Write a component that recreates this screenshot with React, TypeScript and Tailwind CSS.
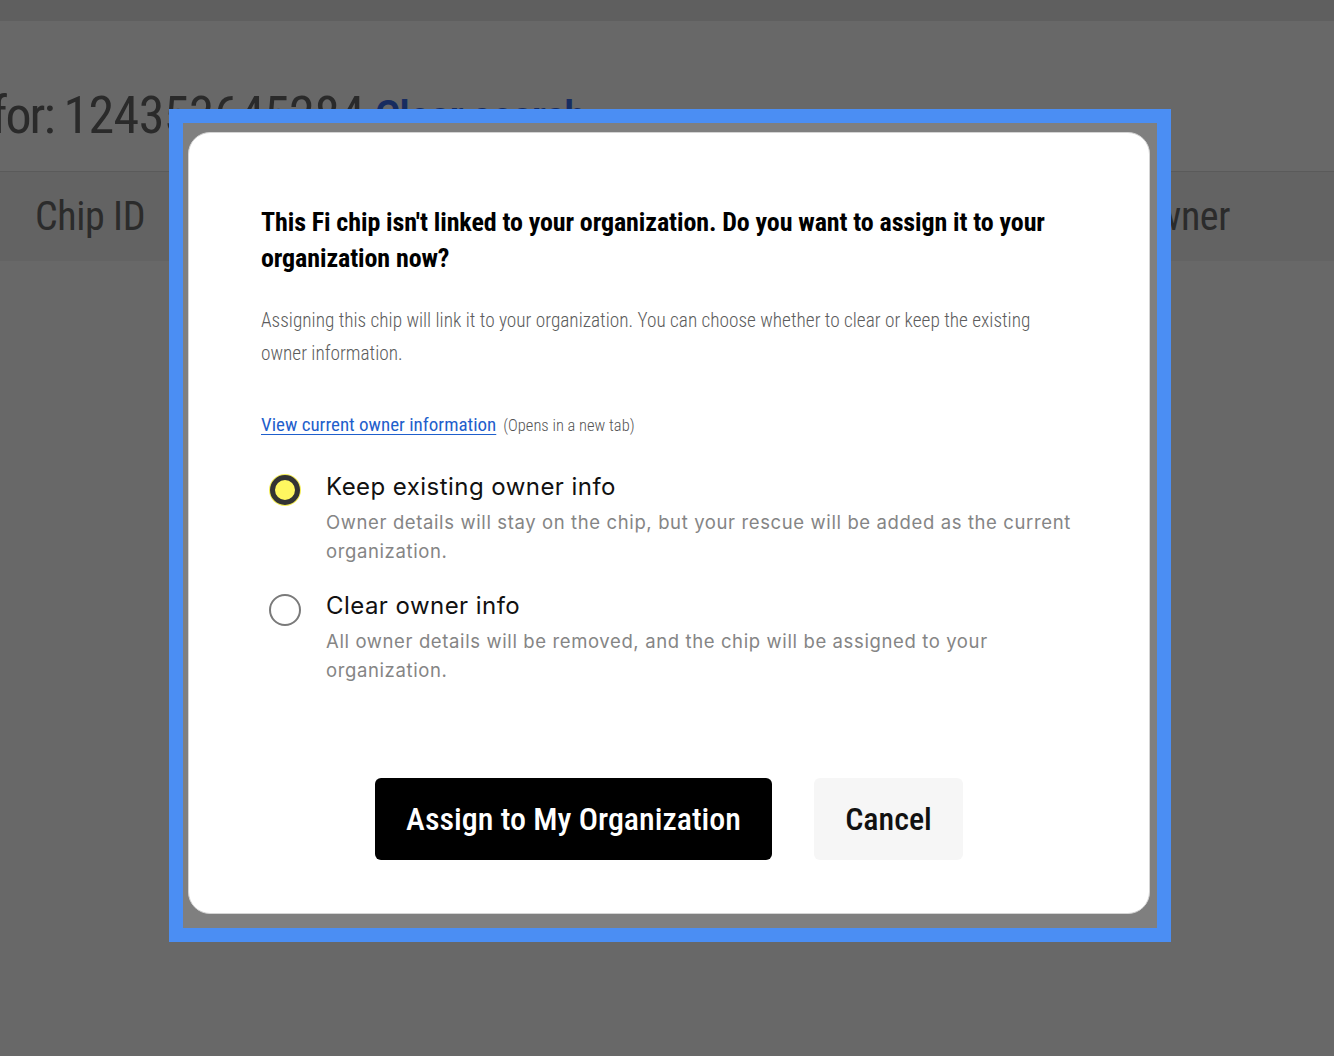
import React from "react";

const cond = { fontFamily: '"Roboto Condensed", "Open Sans Condensed", "DejaVu Sans Condensed", sans-serif' };
const geo = { fontFamily: 'Inter, "Noto Sans", "Liberation Sans", sans-serif' };

export default function App() {
  return (
    <div className="relative w-full h-[1056px] overflow-hidden bg-[#686868]" style={cond}>
      <div className="h-[21px] bg-[#5f5f5f]" />
      <div className="h-[150px] flex items-end pb-[29px]">
        <div className="ml-[-9px] flex items-baseline gap-[10px] leading-none whitespace-nowrap">
          <span className="text-[52px] tracking-[-0.6px] text-[#2a2a2a]">
            <span className="tracking-[-2px]">for: </span>124353645284
          </span>
          <span className="text-[46px] tracking-[-1.5px] text-[#172c60] font-medium">Clear search</span>
        </div>
      </div>
      <div className="h-[90px] bg-[#636363] border-t border-[#5a5a5a] flex items-center justify-between pl-[35px] pr-[104px] text-[40px] tracking-[-0.4px] text-[#2b2b2b]">
        <span>Chip ID</span>
        <span>Owner</span>
      </div>

      <div className="absolute left-[169px] top-[109px] w-[1002px] h-[833px] border-[14px] border-[#4b8ef3] bg-[#7f7f7f] pt-[9px] pl-[5px] pr-[7px] pb-[14px] flex">
        <div className="flex-1 bg-white rounded-[22px] border border-[#d4d4d4] pt-[71px] px-[72px] flex flex-col">
          <h2 className="text-[26px] leading-[36px] font-bold tracking-[-0.1px] text-black">
            This Fi chip isn't linked to your organization. Do you want to assign it to your organization now?
          </h2>
          <p className="mt-[28px] max-w-[790px] text-[19.3px] leading-[33px] font-light text-[#5c5c5c]">
            Assigning this chip will link it to your organization. You can choose whether to clear or keep the existing owner information.
          </p>
          <div className="mt-[40px] flex items-baseline leading-[30px]">
            <a href="#" className="text-[19px] text-[#1f5fcc] underline underline-offset-[3px] decoration-1">View current owner information</a>
            <span className="ml-[7px] text-[16.5px] font-light text-[#555]">(Opens in a new tab)</span>
          </div>

          <div className="mt-[30px] flex flex-col gap-[24px]" style={geo}>
            <div className="flex items-start">
              <div className="mt-[3px] ml-[8px] w-[32px] h-[32px] rounded-full bg-[#f3ec55] p-[1px] shrink-0">
                <div className="w-full h-full rounded-full border-[5px] border-[#333] bg-[#fff760]" />
              </div>
              <div className="ml-[25px]">
                <div className="text-[24px] leading-[32px] tracking-[0.45px] text-[#111]">Keep existing owner info</div>
                <div className="mt-[5px] text-[18.5px] leading-[29px] tracking-[0.62px] text-[#858585]">
                  Owner details will stay on the chip, but your rescue will be added as the current organization.
                </div>
              </div>
            </div>
            <div className="flex items-start">
              <div className="mt-[4px] ml-[8px] w-[32px] h-[32px] rounded-full border-2 border-[#7a7a7a] bg-white shrink-0" />
              <div className="ml-[25px]">
                <div className="text-[24px] leading-[32px] tracking-[0.45px] text-[#111]">Clear owner info</div>
                <div className="mt-[5px] text-[18.5px] leading-[29px] tracking-[0.62px] text-[#858585]">
                  All owner details will be removed, and the chip will be assigned to your organization.
                </div>
              </div>
            </div>
          </div>

          <div className="mt-[93px] flex justify-center gap-[42px]">
            <button className="w-[397px] h-[82px] rounded-[6px] bg-black text-white text-[32px] font-medium whitespace-nowrap">
              Assign to My Organization
            </button>
            <button className="w-[149px] h-[82px] rounded-[6px] bg-[#f6f6f6] text-[#111] text-[32px] font-medium">
              Cancel
            </button>
          </div>
        </div>
      </div>
    </div>
  );
}
